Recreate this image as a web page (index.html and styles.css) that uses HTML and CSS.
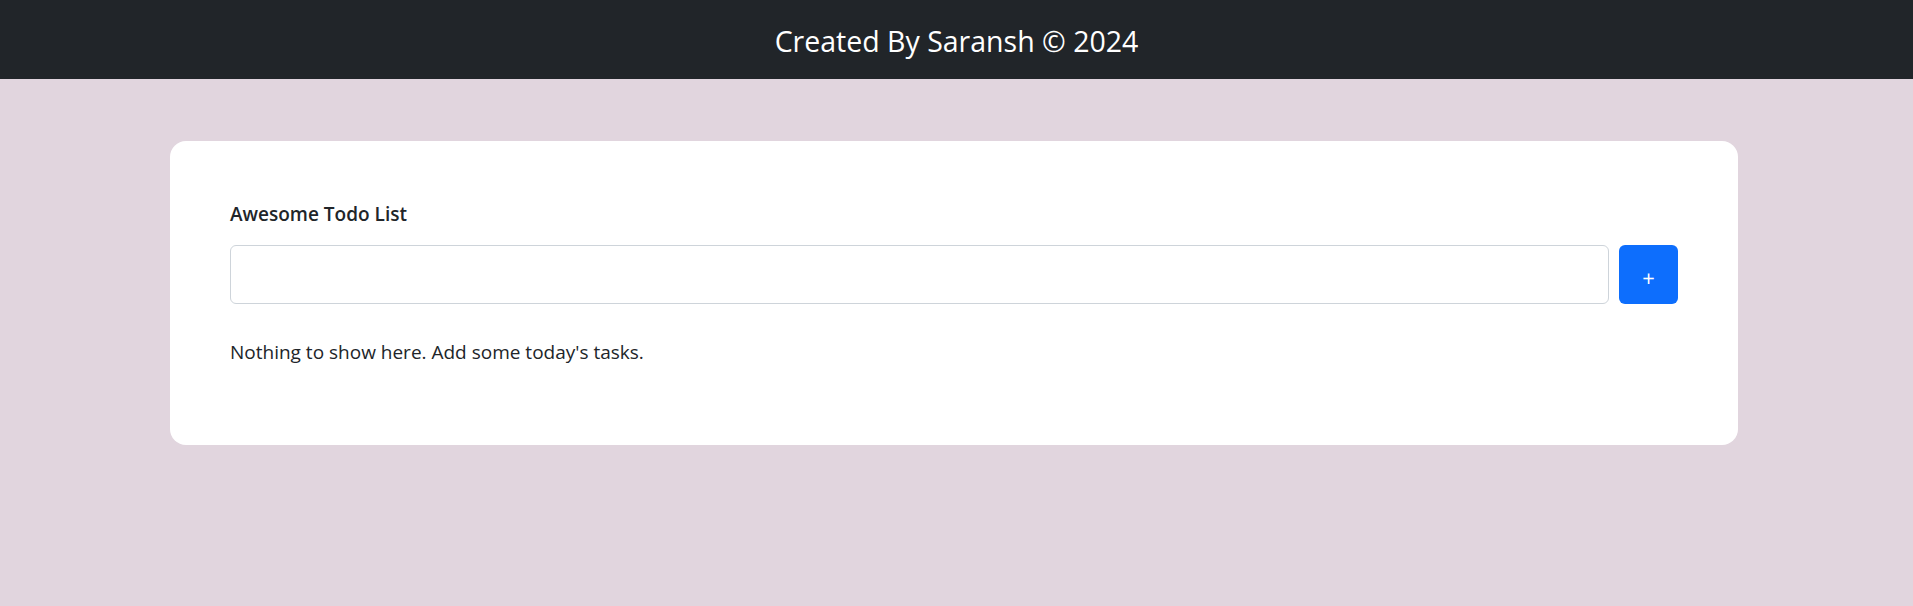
FILE: index.html
```html
<!DOCTYPE html>
<html lang="en">
<head>
<meta charset="utf-8">
<title>Awesome Todo List</title>
<link rel="stylesheet" href="styles.css">
</head>
<body>
<header class="topbar">
  <h3 class="topbar-title">Created By Saransh © 2024</h3>
</header>
<main class="page">
  <section class="card">
    <label class="card-label" for="task">Awesome Todo List</label>
    <div class="add-row">
      <input id="task" class="task-input" type="text">
      <button class="add-btn" type="button">+</button>
    </div>
    <p class="empty">Nothing to show here. Add some today's tasks.</p>
  </section>
</main>
</body>
</html>
```
FILE: styles.css
```css
* { box-sizing: border-box; }
html, body { margin: 0; padding: 0; }
body {
  background: #e1d5de;
  font-family: "Open Sans", "Noto Sans", sans-serif;
  color: #212529;
  min-height: 606px;
}
.topbar {
  background: #212529;
  height: 79px;
  display: flex;
  align-items: center;
  justify-content: center;
}
.topbar-title {
  margin: 0;
  color: #fff;
  font-weight: 400;
  font-size: 28.5px;
  line-height: 36px;
  padding-top: 2px;
}
.page {
  padding: 62px 175px 0 170px;
}
.card {
  background: #fff;
  border-radius: 16px;
  height: 304px;
  padding: 61px 60px 0 60px;
  display: flex;
  flex-direction: column;
}
.card-label {
  font-weight: 600;
  font-size: 19px;
  line-height: 24px;
  margin-bottom: 19px;
}
.add-row {
  display: flex;
  gap: 10px;
}
.task-input {
  flex: 1;
  height: 59px;
  border: 1px solid #ced4da;
  border-radius: 6px;
  font: inherit;
  padding: 0 14px;
}
.add-btn {
  width: 59px;
  height: 59px;
  border: none;
  border-radius: 6px;
  background: #0d6efd;
  color: #fff;
  font-family: inherit;
  font-size: 22px;
  padding: 4px 0 0;
}
.empty {
  margin: 35px 0 0;
  font-size: 19px;
  line-height: 26px;
}
```
